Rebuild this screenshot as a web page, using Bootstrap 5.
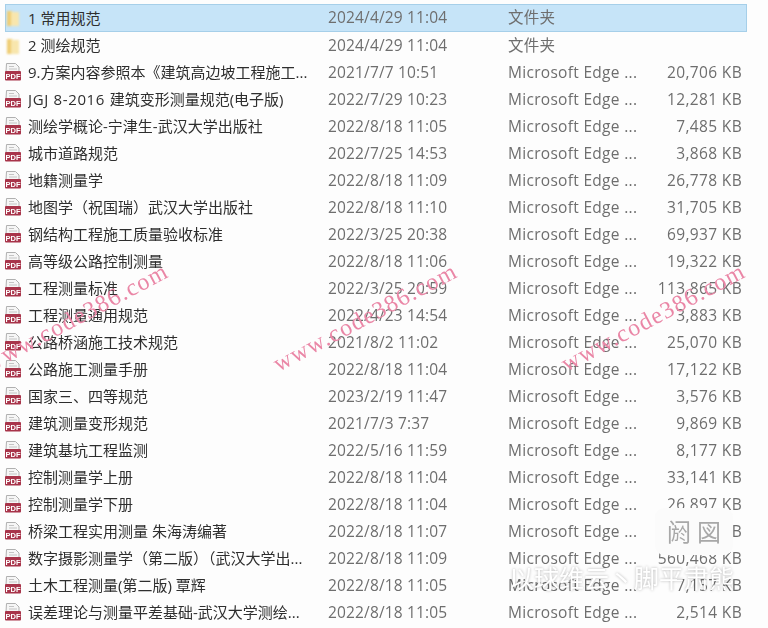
<!DOCTYPE html>
<html lang="zh-CN">
<head>
<meta charset="utf-8">
<title>文件列表</title>
<link href="https://cdn.jsdelivr.net/npm/bootstrap@5.3.0/dist/css/bootstrap.min.css" rel="stylesheet">
<style>
html,body{height:628px;overflow:hidden;background:#fdfdfd;}
body{font-family:"Open Sans","Noto Sans CJK SC",sans-serif;font-size:15px;position:relative;}
.flist{padding:5px 21px 0 5px;filter:blur(.25px);}
.frow{height:27px;white-space:nowrap;}
.frow.sel{height:28px;margin-top:-1px;background:#c6e4f8;box-shadow:inset 0 0 0 1px #a6cfe9;}
.ficon{width:18px;height:20px;flex:none;margin-right:5px;}
.ficon.fold{filter:blur(.8px);}
.fname{width:300px;flex:none;color:#2e2e2e;overflow:hidden;}
.ltn{letter-spacing:.65px;}
.fdate{width:180px;flex:none;color:#6e6e6e;font-size:15.5px;letter-spacing:.15px;}
.ftype{width:140px;flex:none;color:#6e6e6e;font-size:15.5px;letter-spacing:.3px;}
.fsize{width:94px;flex:none;color:#6e6e6e;text-align:right;font-size:15.5px;letter-spacing:.35px;}
.wmark{position:absolute;top:305px;font-family:"Liberation Serif",serif;font-size:24px;letter-spacing:1.3px;color:#ea86a6;transform:rotate(-28deg);white-space:nowrap;line-height:24px;width:230px;text-align:center;}
.wm1{left:-39px;}.wm2{left:250px;}.wm3{left:538px;}
.badgebox{position:absolute;left:655px;top:508px;width:78px;height:47px;background:#fbfbfb;border-radius:9px;color:#a8a8a8;font-size:24px;line-height:47px;text-align:center;filter:blur(.7px);}
.vmark{position:absolute;left:509px;top:563px;color:#fff;font-size:25px;line-height:30px;white-space:nowrap;filter:blur(.5px);text-shadow:0 0 3px rgba(0,0,0,.3);}
</style>
</head>
<body>
<svg width="0" height="0" class="position-absolute">
<defs>
<symbol id="ipdf" viewBox="0 0 18 20">
<path d="M1.5.5h9l3.5 3.5v5h-13z" fill="#f6f6f6" stroke="#b0b0b0"/>
<path d="M4 3.5h5M4 6h8" stroke="#c4c4c4"/>
<rect x="0" y="8" width="16" height="9.5" rx="1" fill="#a8344a"/>
<text x="8" y="15.5" text-anchor="middle" font-family="Liberation Sans,sans-serif" font-size="7.5" font-weight="700" fill="#fff">PDF</text>
</symbol>
<symbol id="ifold" viewBox="0 0 18 20">
<path d="M2 3h5l1 1h6v14H2z" fill="#f4d98c"/>
<path d="M6 4h8v14H6z" fill="#f8e6ad"/>
<path d="M2 3h4v15H2z" fill="#efcd74"/>
</symbol>
</defs>
</svg>
<div class="flist">
<div class="frow sel d-flex align-items-center"><svg class="ficon fold"><use href="#ifold"/></svg><div class="fname">1 常用规范</div><div class="fdate">2024/4/29 11:04</div><div class="ftype">文件夹</div><div class="fsize"></div></div>
<div class="frow d-flex align-items-center"><svg class="ficon fold"><use href="#ifold"/></svg><div class="fname">2 测绘规范</div><div class="fdate">2024/4/29 11:04</div><div class="ftype">文件夹</div><div class="fsize"></div></div>
<div class="frow d-flex align-items-center"><svg class="ficon"><use href="#ipdf"/></svg><div class="fname">9.方案内容参照本《建筑高边坡工程施工...</div><div class="fdate">2021/7/7 10:51</div><div class="ftype">Microsoft Edge ...</div><div class="fsize">20,706 KB</div></div>
<div class="frow d-flex align-items-center"><svg class="ficon"><use href="#ipdf"/></svg><div class="fname"><span class="ltn">JGJ 8-2016 </span>建筑变形测量规范(电子版)</div><div class="fdate">2022/7/29 10:23</div><div class="ftype">Microsoft Edge ...</div><div class="fsize">12,281 KB</div></div>
<div class="frow d-flex align-items-center"><svg class="ficon"><use href="#ipdf"/></svg><div class="fname">测绘学概论-宁津生-武汉大学出版社</div><div class="fdate">2022/8/18 11:05</div><div class="ftype">Microsoft Edge ...</div><div class="fsize">7,485 KB</div></div>
<div class="frow d-flex align-items-center"><svg class="ficon"><use href="#ipdf"/></svg><div class="fname">城市道路规范</div><div class="fdate">2022/7/25 14:53</div><div class="ftype">Microsoft Edge ...</div><div class="fsize">3,868 KB</div></div>
<div class="frow d-flex align-items-center"><svg class="ficon"><use href="#ipdf"/></svg><div class="fname">地籍测量学</div><div class="fdate">2022/8/18 11:09</div><div class="ftype">Microsoft Edge ...</div><div class="fsize">26,778 KB</div></div>
<div class="frow d-flex align-items-center"><svg class="ficon"><use href="#ipdf"/></svg><div class="fname">地图学（祝国瑞）武汉大学出版社</div><div class="fdate">2022/8/18 11:10</div><div class="ftype">Microsoft Edge ...</div><div class="fsize">31,705 KB</div></div>
<div class="frow d-flex align-items-center"><svg class="ficon"><use href="#ipdf"/></svg><div class="fname">钢结构工程施工质量验收标准</div><div class="fdate">2022/3/25 20:38</div><div class="ftype">Microsoft Edge ...</div><div class="fsize">69,937 KB</div></div>
<div class="frow d-flex align-items-center"><svg class="ficon"><use href="#ipdf"/></svg><div class="fname">高等级公路控制测量</div><div class="fdate">2022/8/18 11:06</div><div class="ftype">Microsoft Edge ...</div><div class="fsize">19,322 KB</div></div>
<div class="frow d-flex align-items-center"><svg class="ficon"><use href="#ipdf"/></svg><div class="fname">工程测量标准</div><div class="fdate">2022/3/25 20:59</div><div class="ftype">Microsoft Edge ...</div><div class="fsize">113,865 KB</div></div>
<div class="frow d-flex align-items-center"><svg class="ficon"><use href="#ipdf"/></svg><div class="fname">工程测量通用规范</div><div class="fdate">2022/4/23 14:54</div><div class="ftype">Microsoft Edge ...</div><div class="fsize">3,883 KB</div></div>
<div class="frow d-flex align-items-center"><svg class="ficon"><use href="#ipdf"/></svg><div class="fname">公路桥涵施工技术规范</div><div class="fdate">2021/8/2 11:02</div><div class="ftype">Microsoft Edge ...</div><div class="fsize">25,070 KB</div></div>
<div class="frow d-flex align-items-center"><svg class="ficon"><use href="#ipdf"/></svg><div class="fname">公路施工测量手册</div><div class="fdate">2022/8/18 11:04</div><div class="ftype">Microsoft Edge ...</div><div class="fsize">17,122 KB</div></div>
<div class="frow d-flex align-items-center"><svg class="ficon"><use href="#ipdf"/></svg><div class="fname">国家三、四等规范</div><div class="fdate">2023/2/19 11:47</div><div class="ftype">Microsoft Edge ...</div><div class="fsize">3,576 KB</div></div>
<div class="frow d-flex align-items-center"><svg class="ficon"><use href="#ipdf"/></svg><div class="fname">建筑测量变形规范</div><div class="fdate">2021/7/3 7:37</div><div class="ftype">Microsoft Edge ...</div><div class="fsize">9,869 KB</div></div>
<div class="frow d-flex align-items-center"><svg class="ficon"><use href="#ipdf"/></svg><div class="fname">建筑基坑工程监测</div><div class="fdate">2022/5/16 11:59</div><div class="ftype">Microsoft Edge ...</div><div class="fsize">8,177 KB</div></div>
<div class="frow d-flex align-items-center"><svg class="ficon"><use href="#ipdf"/></svg><div class="fname">控制测量学上册</div><div class="fdate">2022/8/18 11:04</div><div class="ftype">Microsoft Edge ...</div><div class="fsize">33,141 KB</div></div>
<div class="frow d-flex align-items-center"><svg class="ficon"><use href="#ipdf"/></svg><div class="fname">控制测量学下册</div><div class="fdate">2022/8/18 11:04</div><div class="ftype">Microsoft Edge ...</div><div class="fsize">26,897 KB</div></div>
<div class="frow d-flex align-items-center"><svg class="ficon"><use href="#ipdf"/></svg><div class="fname">桥梁工程实用测量 朱海涛编著</div><div class="fdate">2022/8/18 11:07</div><div class="ftype">Microsoft Edge ...</div><div class="fsize">8,362 KB</div></div>
<div class="frow d-flex align-items-center"><svg class="ficon"><use href="#ipdf"/></svg><div class="fname">数字摄影测量学（第二版）（武汉大学出...</div><div class="fdate">2022/8/18 11:09</div><div class="ftype">Microsoft Edge ...</div><div class="fsize">560,468 KB</div></div>
<div class="frow d-flex align-items-center"><svg class="ficon"><use href="#ipdf"/></svg><div class="fname">土木工程测量(第二版) 覃辉</div><div class="fdate">2022/8/18 11:05</div><div class="ftype">Microsoft Edge ...</div><div class="fsize">7,157 KB</div></div>
<div class="frow d-flex align-items-center"><svg class="ficon"><use href="#ipdf"/></svg><div class="fname">误差理论与测量平差基础-武汉大学测绘...</div><div class="fdate">2022/8/18 11:05</div><div class="ftype">Microsoft Edge ...</div><div class="fsize">2,514 KB</div></div>
</div>
<div class="wmark wm1">www.code386.com</div>
<div class="wmark wm2">www.code386.com</div>
<div class="wmark wm3">www.code386.com</div>
<div class="badgebox">阏 図</div>
<div class="vmark">以球维云丶脚平肃熊</div>
</body>
</html>
